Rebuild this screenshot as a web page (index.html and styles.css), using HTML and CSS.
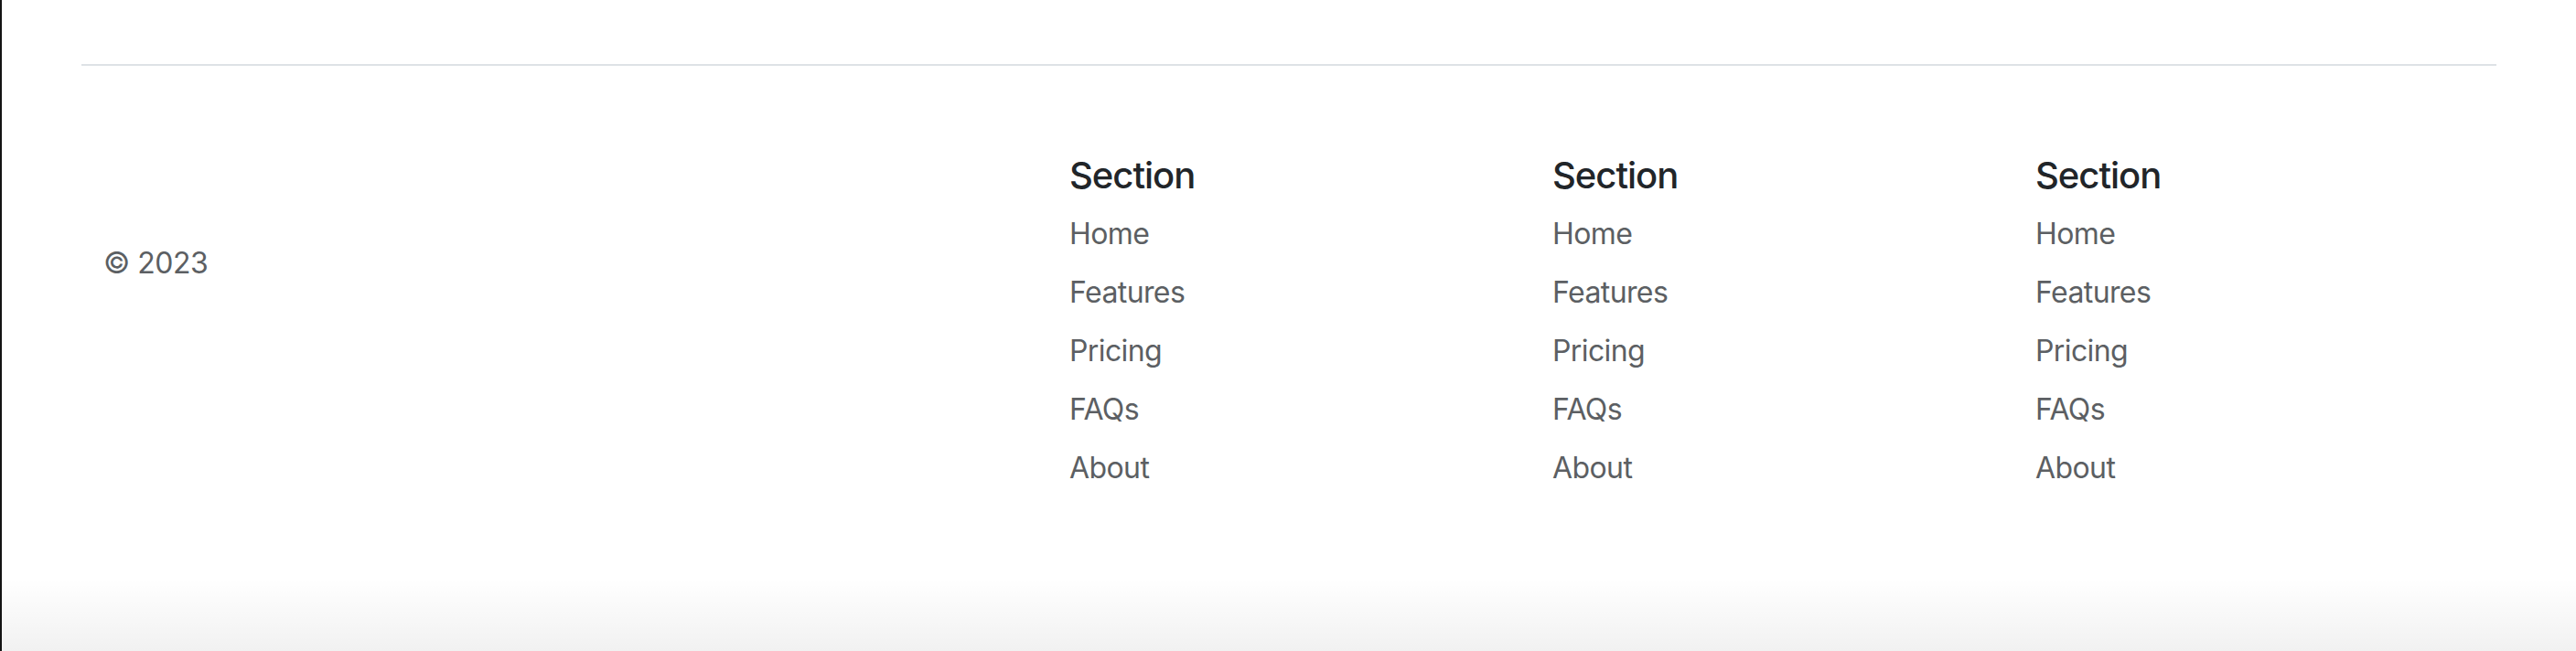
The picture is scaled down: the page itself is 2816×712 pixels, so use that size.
FILE: index.html
```html
<!DOCTYPE html>
<html lang="en">
<head>
<meta charset="utf-8">
<title>Footer</title>
<link rel="stylesheet" href="styles.css">
</head>
<body>
<div class="page">
  <div class="container">
    <footer class="footer">
      <div class="col col-brand">
        <p class="copy">© 2023</p>
      </div>
      <div class="col"></div>
      <div class="col">
        <h5 class="heading">Section</h5>
        <ul class="nav">
          <li><a href="#">Home</a></li>
          <li><a href="#">Features</a></li>
          <li><a href="#">Pricing</a></li>
          <li><a href="#">FAQs</a></li>
          <li><a href="#">About</a></li>
        </ul>
      </div>
      <div class="col">
        <h5 class="heading">Section</h5>
        <ul class="nav">
          <li><a href="#">Home</a></li>
          <li><a href="#">Features</a></li>
          <li><a href="#">Pricing</a></li>
          <li><a href="#">FAQs</a></li>
          <li><a href="#">About</a></li>
        </ul>
      </div>
      <div class="col">
        <h5 class="heading">Section</h5>
        <ul class="nav">
          <li><a href="#">Home</a></li>
          <li><a href="#">Features</a></li>
          <li><a href="#">Pricing</a></li>
          <li><a href="#">FAQs</a></li>
          <li><a href="#">About</a></li>
        </ul>
      </div>
    </footer>
  </div>
  <div class="shade"></div>
</div>
</body>
</html>
```
FILE: styles.css
```css
* { box-sizing: border-box; }
html, body {
  margin: 0;
  padding: 0;
  background: #fff;
  overflow: hidden;
}
body {
  font-family: Inter, "Liberation Sans", sans-serif;
  color: #212529;
}
.page {
  position: relative;
  height: 712px;
  border-left: 2px solid #141414;
  overflow: hidden;
}
.container {
  width: 2640px;
  margin: 0 auto;
  padding-top: 70px;
}
.footer {
  display: grid;
  grid-template-columns: repeat(5, 1fr);
  border-top: 2px solid #dee2e6;
  padding: 96px 0;
}
.col {
  padding: 0 24px 32px;
}
.col-brand {
  padding-top: 96px;
}
.copy {
  margin: 0;
  font-size: 32px;
  line-height: 48px;
  color: #5c5f63;
  letter-spacing: -0.5px;
}
.heading {
  margin: 0 0 16px;
  font-size: 40px;
  line-height: 48px;
  font-weight: 500;
  color: #212529;
  letter-spacing: -1px;
}
.nav {
  list-style: none;
  margin: 0;
  padding: 0;
  display: flex;
  flex-direction: column;
  gap: 16px;
}
.nav a {
  display: block;
  font-size: 32px;
  line-height: 48px;
  color: #5c5f63;
  text-decoration: none;
  letter-spacing: -0.6px;
}
.shade {
  position: absolute;
  left: 0;
  right: 0;
  bottom: 0;
  height: 80px;
  background: linear-gradient(to bottom, rgba(0,0,0,0), rgba(0,0,0,0.055));
  pointer-events: none;
}
```
